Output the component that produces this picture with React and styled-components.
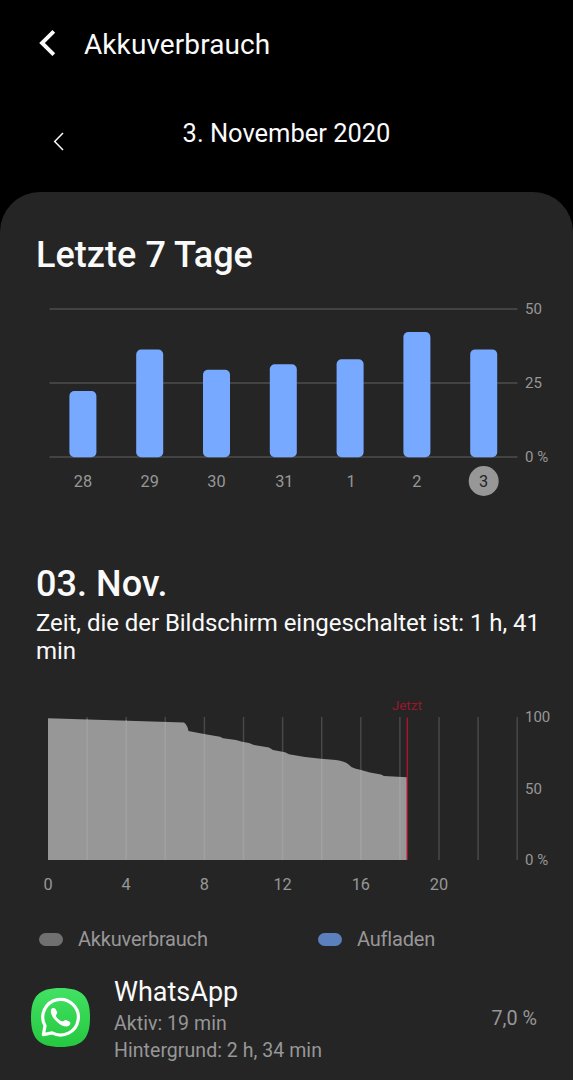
import React from "react";
import styled, { createGlobalStyle } from "styled-components";

const GlobalStyle = createGlobalStyle`
  * { box-sizing: border-box; }
  body {
    margin: 0;
    background: #000;
    color: #fafafa;
    font-family: Roboto, "Noto Sans", sans-serif;
  }
`;

const Screen = styled.main`
  display: flex;
  flex-direction: column;
  width: 573px;
  height: 1080px;
  overflow: hidden;
  background: #000;
`;

const AppBar = styled.header`
  display: flex;
  align-items: center;
  height: 88px;
  padding-left: 38px;
  gap: 28px;
`;

const AppTitle = styled.h1`
  margin: 0;
  padding-top: 2px;
  font-size: 28px;
  line-height: 34px;
  font-weight: 400;
  letter-spacing: 0.08px;
`;

const Chevron = styled.svg`
  display: block;
  flex: none;
  margin-top: ${(p) => p.$shift || 0}px;
  fill: none;
  stroke: #fafafa;
`;

const DateBar = styled.nav`
  display: grid;
  grid-template-columns: 74px 1fr 74px;
  height: 104px;
  padding-top: 30px;
`;

const PreviousDay = styled.div`
  display: flex;
  justify-content: flex-end;
  padding: 13px 9px 0 0;
`;

const DateLabel = styled.div`
  text-align: center;
  font-size: 25.5px;
  line-height: 30px;
  letter-spacing: -0.02px;
`;

const Sheet = styled.section`
  display: flex;
  flex-direction: column;
  flex: 1;
  padding-top: 41px;
  border-radius: 40px 40px 0 0;
  background: #252525;
`;

const Heading = styled.h2`
  margin: 0;
  padding-left: 36px;
  font-size: 36px;
  line-height: 44px;
  font-weight: 500;
  letter-spacing: 0.05px;
`;

const ScreenTime = styled.p`
  margin: 0;
  padding: 3px 30px 0 36px;
  font-size: 24px;
  line-height: 28px;
  letter-spacing: -0.05px;
`;

const Chart = styled.svg`
  display: block;
  flex: none;
  overflow: visible;
  margin: ${(p) => p.$margin};
`;

const GridLine = styled.line`
  stroke: ${(p) => p.$color || "#434343"};
  stroke-width: ${(p) => p.$width || 1.8};
`;

const AxisText = styled.text`
  fill: ${(p) => p.$color || "#979797"};
  font-size: ${(p) => p.$size || 16.3}px;
  text-anchor: ${(p) => p.$anchor || "middle"};
`;

const Legend = styled.div`
  display: grid;
  grid-template-columns: 279px 1fr;
  height: 28px;
  padding-left: 39px;
  margin-top: 23px;
`;

const LegendItem = styled.div`
  display: flex;
  align-items: center;
  gap: 15px;
  color: #979797;
  font-size: 20px;
  line-height: 28px;
  letter-spacing: -0.2px;
`;

const Swatch = styled.span`
  width: 24px;
  height: 13px;
  border-radius: 7px;
  background: ${(p) => p.$color};
`;

const AppRow = styled.article`
  display: flex;
  align-items: flex-start;
  height: 92px;
  margin-top: 20px;
  padding: 0 36px 0 30px;
`;

const AppIcon = styled.svg`
  display: block;
  flex: none;
  margin-top: 14px;
`;

const AppInfo = styled.div`
  flex: 1;
  margin: 2px 0 0 24px;
`;

const AppName = styled.div`
  font-size: 27px;
  line-height: 35px;
`;

const AppDetail = styled.div`
  color: #979797;
  font-size: 19.5px;
  line-height: 27px;
  letter-spacing: 0.05px;
`;

const AppShare = styled.div`
  color: #979797;
  font-size: 19.8px;
  line-height: 28px;
  padding-top: 32px;
`;

const days = [
  { label: "28", top: 391 },
  { label: "29", top: 349.5 },
  { label: "30", top: 369.7 },
  { label: "31", top: 364.3, nudge: 1 },
  { label: "1", top: 359.3, nudge: 1 },
  { label: "2", top: 332 },
  { label: "3", top: 349.4, selected: true },
];

function WeekChart() {
  return (
    <Chart width="573" height="208" viewBox="0 296 573 208" $margin="19px 0 58px">
      {[309, 383, 457].map((y) => (
        <GridLine key={y} x1="49.5" x2="517.5" y1={y} y2={y} />
      ))}
      {days.map((d, i) => {
        const x = 82.9 + i * 66.8;
        return (
          <g key={d.label}>
            <rect x={x - 13.5} y={d.top} width="27" height={457.2 - d.top} rx="5" fill="#76a9ff" />
            {d.selected && <circle cx={x} cy="481" r="15" fill="#979797" />}
            <AxisText x={x + (d.nudge || 0)} y="487" $color={d.selected ? "#252525" : undefined}>
              {d.label}
            </AxisText>
          </g>
        );
      })}
      <AxisText x="525" y="314" $size={15} $anchor="start">50</AxisText>
      <AxisText x="525" y="388" $size={15} $anchor="start">25</AxisText>
      <AxisText x="525" y="461.7" $size={15} $anchor="start">0 %</AxisText>
    </Chart>
  );
}

const levelPath =
  "M48 860V718.3L184 722.5Q187.5 725 188.5 731L204 734L220 736.8L223 738.3L236 740L242 741.8L249 743L254 745L269 747.5L273 750L285 752.3L289 754.3L305 757.1L321 758.7L336 760Q345 761.5 348 764Q351 767.5 355 768.5L361 770L370 772.5L381 774.4L384 775.9L407 777.2V860Z";

const innerLineTops = [719.5, 720.5, 722, 734, 742, 752, 759, 770, 777];

function DayChart() {
  const hours = Array.from({ length: 13 }, (_, i) => 48 + i * 39.1);
  return (
    <Chart width="573" height="210" viewBox="0 692 573 210" $margin="27px 0 0">
      {hours.slice(1).map((x) => (
        <GridLine key={x} x1={x} x2={x} y1="717" y2="860" $color="#484848" $width={1.5} />
      ))}
      <path d={levelPath} fill="#979797" />
      {hours.slice(1, 10).map((x, i) => (
        <GridLine key={x} x1={x} x2={x} y1={innerLineTops[i]} y2="860" $color="#a1a1a1" $width={1.5} />
      ))}
      <line x1="407.3" x2="407.3" y1="717.5" y2="860" stroke="#a3172c" strokeWidth="1.5" />
      <AxisText x="406.8" y="710" $size={13.5} $color="#98172a">Jetzt</AxisText>
      {[0, 4, 8, 12, 16, 20].map((h) => (
        <AxisText key={h} x={48 + h * 19.55} y="890">{h}</AxisText>
      ))}
      <AxisText x="525" y="721.7" $size={15} $anchor="start">100</AxisText>
      <AxisText x="525" y="793.5" $size={15} $anchor="start">50</AxisText>
      <AxisText x="525" y="864.7" $size={15} $anchor="start">0 %</AxisText>
    </Chart>
  );
}

function WhatsAppIcon() {
  return (
    <AppIcon width="60" height="60" viewBox="0 0 60 60">
      <defs>
        <linearGradient id="whatsapp" x1="0" y1="0" x2="0" y2="1">
          <stop offset="0" stopColor="#42e163" />
          <stop offset="1" stopColor="#25c840" />
        </linearGradient>
      </defs>
      <path d="M30.5 1C52 1 60 9 60 30.5S52 60 30.5 60S1 52 1 30.5S9 1 30.5 1Z" fill="url(#whatsapp)" />
      <path
        d="M13.4 47.6L15 38.8A17.8 17.8 0 1 1 22.2 45.9Z"
        fill="none"
        stroke="#fff"
        strokeWidth="3.2"
        strokeLinejoin="round"
      />
      <path
        d="M21.2 22.2C22 20.6 24.6 20.5 25.5 22.1L27.1 24.9C27.8 26.4 25.7 27.7 26 28.9C26.5 31 30.1 34 32.3 34.3C33.5 34.4 34.6 32.6 36.1 33L39.6 34.7C40.9 35.5 40.5 37.3 39.2 38.5C37.1 40.3 32.7 39.6 28.6 36.3C23.4 32.1 19.6 26.6 21.2 22.2Z"
        fill="#fff"
      />
    </AppIcon>
  );
}

export default function App() {
  return (
    <Screen>
      <GlobalStyle />
      <AppBar>
        <Chevron width="18" height="28" viewBox="0 0 18 28" strokeWidth="3.9" $shift={-3}>
          <path d="M15.8 2.3L4 14L15.8 25.7" />
        </Chevron>
        <AppTitle>Akkuverbrauch</AppTitle>
      </AppBar>
      <DateBar>
        <PreviousDay>
          <Chevron width="12" height="20" viewBox="0 0 12 20" strokeWidth="1.5">
            <path d="M10 2L1.7 10.5L10 19" />
          </Chevron>
        </PreviousDay>
        <DateLabel>3. November 2020</DateLabel>
      </DateBar>
      <Sheet>
        <Heading>Letzte 7 Tage</Heading>
        <WeekChart />
        <Heading>03. Nov.</Heading>
        <ScreenTime>Zeit, die der Bildschirm eingeschaltet ist: 1 h, 41 min</ScreenTime>
        <DayChart />
        <Legend>
          <LegendItem><Swatch $color="#707070" />Akkuverbrauch</LegendItem>
          <LegendItem><Swatch $color="#5c7fbd" />Aufladen</LegendItem>
        </Legend>
        <AppRow>
          <WhatsAppIcon />
          <AppInfo>
            <AppName>WhatsApp</AppName>
            <AppDetail>Aktiv: 19 min</AppDetail>
            <AppDetail>Hintergrund: 2 h, 34 min</AppDetail>
          </AppInfo>
          <AppShare>7,0 %</AppShare>
        </AppRow>
      </Sheet>
    </Screen>
  );
}
